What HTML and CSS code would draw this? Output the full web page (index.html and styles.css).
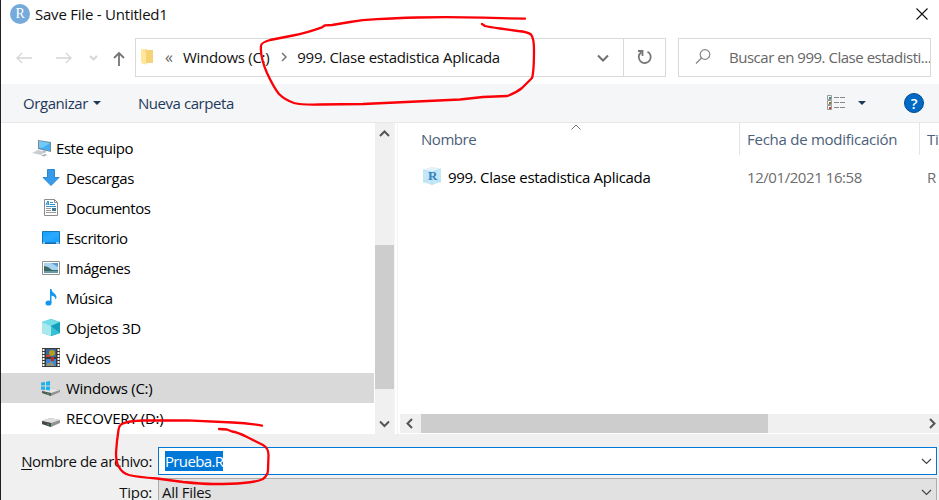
FILE: index.html
```html
<!DOCTYPE html>
<html lang="es">
<head>
<meta charset="utf-8">
<title>Save File - Untitled1</title>
<link rel="stylesheet" href="styles.css">
</head>
<body>
<main class="dialog">
  <header class="titlebar">
    <span class="app-icon">R</span>
    <span class="title"><span class="t-title">Save File - Untitled1</span></span>
    <svg class="close" width="14" height="14" viewBox="0 0 14 14"><path d="M1.500 1.500l11 11M12.500 1.500l-11 11"/></svg>
  </header>

  <nav class="navbar">
    <svg class="nav-icons" width="119" height="39" viewBox="0 0 119 39" fill="none">
      <path class="off" d="M16 20h15M21 15l-5 5 5 5M55 20h15M65 15l5 5-5 5"/>
      <path class="off chev" d="M89 18l3.500 3.500L96 18"/>
      <path class="up" d="M118 28V15M113 20l5-5 5 5"/>
    </svg>
    <div class="address">
      <svg class="folder" width="13" height="18" viewBox="0 0 13 18"><path d="M1 1h5v15H1z" fill="#ffe8a5"/><path d="M4 2h8v13H4z" fill="#f5d275"/><path d="M0 1l5 3v13l-5-3z" fill="#ffe69a"/></svg>
      <span class="dbl">«</span>
      <span class="crumb t-drive">Windows (C:)</span>
      <svg class="sep" width="8" height="10" viewBox="0 0 8 10"><path d="M2 1l4 4-4 4"/></svg>
      <span class="crumb t-file">999. Clase estadistica Aplicada</span>
      <svg class="drop" width="14" height="10" viewBox="0 0 14 10"><path d="M2 3.500l5 5 5-5"/></svg>
      <span class="refresh"><svg width="18" height="18" viewBox="0 0 18 18" fill="none"><path d="M11.500 3.700a6 6 0 1 1-6.300.5M2 3h4.500v5"/></svg></span>
    </div>
    <div class="search">
      <svg width="18" height="18" viewBox="0 0 18 18" fill="none"><circle cx="11" cy="6.500" r="4.800"/><path d="M7.500 10L2 15.500"/></svg>
      <span class="t-search">Buscar en 999. Clase estadisti...</span>
    </div>
  </nav>

  <div class="toolbar">
    <span class="t-org">Organizar</span><i class="tri"></i>
    <span class="newfolder t-new">Nueva carpeta</span>
    <svg class="view" width="20" height="18" viewBox="0 0 20 18" fill="none">
      <path d="M1.500 1.500h4v4h-4zM1.500 6.500h4v4h-4zM1.500 11.500h4v4h-4z" stroke="#999"/>
      <path d="M8 3.500h5m1 0h5M8 8.500h5m1 0h5M8 13.500h5m1 0h5" stroke="#888"/>
      <path d="M3 3h2v2H3z" fill="#3c918d"/><path d="M3 8h2v2H3z" fill="#8b7c29"/><path d="M3 13h2v2H3z" fill="#c64723"/>
    </svg>
    <i class="tri view-tri"></i>
    <span class="help">?</span>
  </div>

  <div class="content">
    <ul class="tree">
      <li class="root"><svg class="ico" width="20" height="20" viewBox="0 0 20 20"><path d="M6 2l13 2v10L6 11z" fill="#788994"/><path d="M7 3l11 2v8L7 10z" fill="#42b1f3"/><path d="M7 3l11 2-8 5-3-.5z" fill="#75c9f8"/><path d="M11 12l3 1-1 2h-3z" fill="#a9b6be"/><path d="M0 15l6-3 7 2-4 3z" fill="#c6ced4"/><path d="M9 17.500l4-1.500 2 1-3 1.500z" fill="#a5b0b8"/></svg><span class="t-equipo">Este equipo</span></li>
      <li><svg class="ico" width="20" height="20" viewBox="0 0 20 20"><path d="M6.500 1.500h7v8h4.500l-8 8-8-8h4.500z" fill="#389be9" stroke="#2788d6"/></svg><span class="t-desc">Descargas</span></li>
      <li><svg class="ico" width="20" height="20" viewBox="0 0 20 20"><path d="M3.500 1.500h10l3 3v13h-13z" fill="#fff" stroke="#8c8c8c"/><path d="M13.500 1.500v3h3" fill="none" stroke="#8c8c8c"/><path d="M9 4.500h3M9 6.500h5M5 8.500h10" stroke="#2d93ce"/><path d="M5 7l2-4 1 4M5.500 6H8" fill="none" stroke="#1986c7"/><path d="M5 10.500h5M5 12.500h5M5 14.500h10" stroke="#999"/><path d="M11 10h4v3h-4z" fill="#447a91"/></svg><span class="t-doc">Documentos</span></li>
      <li><svg class="ico" width="20" height="20" viewBox="0 0 20 20"><path d="M1.500 3.500h17v12h-17z" fill="#1aa2fc" stroke="#1976b7"/><path d="M13 4h5v4L6 14H2V9z" fill="#35adfd" opacity=".5"/><path d="M2 15h2m11 0h3" stroke="#fff"/><path d="M4 15h11" stroke="#16649c"/></svg><span class="t-desc">Escritorio</span></li>
      <li><svg class="ico" width="20" height="20" viewBox="0 0 20 20"><path d="M1.500 3.500h17v13h-17z" fill="#fff" stroke="#929292"/><path d="M3 5h14v10H3z" fill="#a8d4f0"/><path d="M3 5h7l7 4v-4z" fill="#5b9bd0"/><path d="M3 8l4 1 4 3h6v1H3z" fill="#3d6761"/><path d="M3 13h14v2H3z" fill="#669aa9"/></svg><span class="t-desc">Imágenes</span></li>
      <li><svg class="ico" width="20" height="20" viewBox="0 0 20 20"><ellipse cx="7.500" cy="15" rx="3" ry="2.600" fill="#1596ee"/><path d="M9 1h1.500c0 4 5.500 4.500 5 9l-1 1.500c0-3-2.500-3.500-4-4V15H9z" fill="#1596ee"/></svg><span class="t-desc">Música</span></li>
      <li><svg class="ico" width="20" height="20" viewBox="0 0 20 20"><path d="M1 4l9-3 9 3v11l-9 3-9-3z" fill="#35bdd1"/><path d="M1 4l9-3 9 3-9 4z" fill="#72dce7"/><path d="M1 4l9 4v10l-9-3z" fill="#a9e8ed"/><path d="M10 8l9-4v11l-9 3z" fill="#139fbd"/><path d="M10 8l9 7-9 3z" fill="#37c1d3"/></svg><span class="t-obj">Objetos 3D</span></li>
      <li><svg class="ico" width="20" height="20" viewBox="0 0 20 20"><path d="M1 0h18v19H1z" fill="#3b3838"/><path d="M5 1h10v8H5z" fill="#3667a2"/><path d="M5 11h10v7H5z" fill="#3d85cf"/><circle cx="11" cy="5" r="3" fill="#b89b1b"/><path d="M5 7h4v2H5z" fill="#d0412a"/><path d="M10 9h3v4h-3z" fill="#b72e2d"/><path d="M6 15h3v-2l4 3v2H5z" fill="#91937b"/><path d="M2.500 1v17m15-17v17" stroke="#fff" stroke-width="2" stroke-dasharray="2 1"/></svg><span class="t-vid">Videos</span></li>
      <li class="selected"><svg class="ico" width="20" height="20" viewBox="0 0 20 20"><path d="M1 13l8-3 10 2v2l-9 4-9-3z" fill="#929292"/><path d="M1 13l8-3 10 2-9 3z" fill="#e4e4e4"/><path d="M1 13l9 2v3l-9-3z" fill="#575757"/><path d="M6 15l2 .5v1l-2-.5z" fill="#24c832"/><path d="M0 4.500l4-.5v3.500H0zM5 3.700L9 3v4.500H5zM0 8.500h4V12l-4-.5zM5 8.500h4v4l-4-.5z" fill="#20b2ee"/></svg><span class="t-drive">Windows (C:)</span></li>
      <li><svg class="ico" width="20" height="20" viewBox="0 0 20 20"><path d="M1 13l8-3 10 2v3l-9 4-9-3z" fill="#929292"/><path d="M1 13l8-3 10 2-9 3z" fill="#dfdfdf"/><path d="M1 13l9 2v4l-9-3z" fill="#494949"/><path d="M6 15.500l2 .5v1l-2-.5z" fill="#24c832"/></svg><span class="t-rec">RECOVERY (D:)</span></li>
    </ul>
    <div class="vscroll">
      <svg width="19" height="20" viewBox="0 0 19 20"><path d="M5 13l4.500-4.500L14 13"/></svg>
      <div class="vthumb"></div>
      <svg width="19" height="20" viewBox="0 0 19 20"><path d="M5 7.500L9.500 12 14 7.500"/></svg>
    </div>
    <section class="files">
      <div class="columns">
        <div class="col name"><span class="t-nom">Nombre</span><svg class="sort" width="10" height="6" viewBox="0 0 10 6"><path d="M.5 5.500L5 1l4.500 4.500"/></svg></div>
        <div class="col date"><span class="t-fecha">Fecha de modificación</span></div>
        <div class="col type">Ti</div>
      </div>
      <div class="row">
        <svg class="rproj" width="20" height="20" viewBox="0 0 20 20"><path d="M1 4l9-3 9 2v13l-9 3-9-3z" fill="#c5e7f6"/><path d="M1 4l9 2 9-3-9-2z" fill="#e2f4fb"/><path d="M1 4l9 2v13M10 6l9-3M1 16l9-4 9 4" fill="none" stroke="#acd9ec" stroke-width=".7"/><text x="6" y="14">R</text></svg>
        <span class="fname"><span class="t-file">999. Clase estadistica Aplicada</span></span>
        <span class="fdate"><span class="t-date">12/01/2021 16:58</span></span>
        <span class="ftype">R</span>
      </div>
      <div class="hscroll">
        <svg width="21" height="19" viewBox="0 0 21 19"><path d="M12 5L7.500 9.500 12 14"/></svg>
        <div class="hthumb"></div>
        <svg class="right" width="15" height="19" viewBox="0 0 15 19"><path d="M6 5l4.500 4.500L6 14"/></svg>
      </div>
    </section>
  </div>

  <footer class="form">
    <div class="field">
      <label><span class="t-label"><u>N</u>ombre de archivo:</span></label>
      <div class="input"><span class="sel t-prueba">Prueba.R</span><svg width="11" height="7" viewBox="0 0 11 7"><path d="M1 1l4.500 4.500L10 1"/></svg></div>
    </div>
    <div class="field second">
      <label><span class="t-tipo"><u>T</u>ipo:</span></label>
      <div class="input combo"><span class="t-all">All Files</span><svg width="11" height="7" viewBox="0 0 11 7"><path d="M1 1l4.500 4.500L10 1"/></svg></div>
    </div>
  </footer>

  <svg class="marks" width="939" height="500" viewBox="0 0 939 500">
    <path d="M525 18.700L483 17.700Q448 16.500 417 17.500Q395 18 377 19.200Q362 20 350 22L332 25L325 25.300L322 27.300Q306 33 293 35.500L270 40Q261 42.500 261 46Q260 57 267 73Q274 88 279 94Q285 100 294 103Q302 105 320 104.500L363 104L460 99.500L483 97L507 96Q516 93 522 88L532 78Q534 72 534 50Q534 38 531 34.500Q528 32 518 31L500 28.500Q489 27 485 26L482 24"/>
    <path d="M262 425.700Q247 423 233 422.500L187 420.300L143 420.500Q128 421 123 423.500Q119 425 118.500 430L117 441L116 453Q116 463 119 467Q122 473 129 475Q137 477 157 478.500L183 482Q203 484 213 484Q233 484 243 483Q257 482 263 479Q268 475 268 470L268.500 455Q268.500 448 263 445L247 437Q237 432 232 431.500L227 429.500L219 429"/>
  </svg>
</main>
</body>
</html>
```
FILE: styles.css
```css
* { box-sizing: border-box; }
body { margin: 0; font-family: "Open Sans", "Noto Sans", sans-serif; font-size: 15px; line-height: 20px; color: #111; overflow: hidden; }
svg { flex: none; }
.dialog { position: relative; width: 939px; height: 500px; overflow: hidden; background: #fff; border-left: 1px solid #202024; white-space: nowrap; display: flex; flex-direction: column; letter-spacing: -0.3px; }
.titlebar { height: 38px; flex: none; display: flex; align-items: flex-start; padding: 4px 10px 0 9px; }
.app-icon { width: 20px; height: 20px; border-radius: 50%; background: #75aadb; color: #fff; font: 14px/19px "Liberation Serif", serif; text-align: center; }
.title { margin-left: 5px; flex: 1; }
.close { margin-top: 3px; stroke: #111; stroke-width: 1.1; }

.navbar { height: 39px; flex: none; display: flex; }
.nav-icons { flex: 0 0 119px; width: 119px; margin-right: 15px; overflow: visible; stroke-width: 1.3; }
.off { stroke: #d5d5d5; }
.chev { stroke-width: 1.8; }
.up { stroke: #757575; stroke-width: 1.8; }
.address { width: 531px; border: 1px solid #d9d9d9; display: flex; align-items: center; padding-bottom: 1px; }
.folder { margin-left: 5px; }
.dbl { margin-left: 11px; width: 18px; color: #666; font-size: 16px; }
.sep { margin-left: 11px; margin-right: 9px; fill: none; stroke: #777; stroke-width: 1.5; }
.drop { margin-left: auto; margin-right: 13px; fill: none; stroke: #707070; stroke-width: 2; }
.refresh { width: 42px; height: 37px; border-left: 1px solid #d9d9d9; display: flex; align-items: center; justify-content: center; }
.refresh path { stroke: #777; stroke-width: 1.8; }
.search { margin-left: 12px; width: 253px; border: 1px solid #d9d9d9; display: flex; align-items: center; padding: 0 0 1px 15px; color: #666; overflow: hidden; }
.search svg { stroke: #858585; stroke-width: 1.2; margin-right: 17px; }

.toolbar { height: 39px; flex: none; margin-top: 7px; background: #f5f6f7; border-bottom: 1px solid #e7e8ea; display: flex; align-items: center; padding-left: 22px; color: #1e395b; }
.tri { width: 0; height: 0; border: 4px solid transparent; border-top-color: #1e395b; border-bottom: 0; margin-left: 5px; }
.newfolder { margin-left: 37px; }
.view { margin-left: auto; }
.view-tri { margin-left: 12px; }
.help { width: 20px; height: 20px; margin-left: 38px; margin-right: 15px; border-radius: 50%; background: #0069c5; border: 1px solid #004c92; color: #fff; text-align: center; line-height: 18px; font-size: 15px; font-weight: 600; }

.content { height: 311px; flex: none; display: flex; }
.tree { list-style: none; margin: 0; padding: 10px 0 0; width: 373px; color: #000; }
.tree li { height: 30px; display: flex; align-items: center; padding-left: 40px; }
.tree li.root { padding-left: 31px; }
.tree .ico { margin-right: 5px; }
.tree .root .ico { margin-right: 4px; }
.tree .selected { background: #d9d9d9; }
.vscroll { margin-left: 1px; width: 20px; background: #f0f0f0; display: flex; flex-direction: column; align-items: flex-start; border-right: 1px solid #f5f5f5; }
.vscroll svg, .hscroll svg { fill: none; stroke: #555; stroke-width: 2; }
.vthumb { width: 19px; height: 144px; margin-top: 102px; margin-bottom: 25px; background: #cdcdcd; }
.files { flex: 1; min-width: 0; margin-left: 2px; border-left: 1px solid #f3f3f3; display: flex; flex-direction: column; overflow: hidden; }
.columns { height: 32px; flex: none; display: flex; color: #4c607a; overflow: hidden; }
.col { height: 32px; padding: 6px 0 0 7px; border-left: 1px solid #e5e5e5; flex: none; }
.name { width: 341px; border-left: 0; padding-left: 23px; display: flex; align-items: flex-start; }
.sort { margin-top: -5px; margin-left: 95px; fill: none; stroke: #777; }
.date { width: 180px; }
.row { height: 44px; display: flex; align-items: center; padding-left: 24px; }
.rproj { margin-top: -3px; }
.rproj text { font: bold 13px "Liberation Serif", serif; fill: #3283bf; }
.fname { flex: 0 0 305px; padding-left: 6px; color: #000; }
.fdate { flex: 0 0 180px; color: #6d6d6d; }
.ftype { color: #6d6d6d; }
.hscroll { margin: auto 0 1px 2px; height: 19px; background: #f0f0f0; display: flex; }
.hthumb { width: 347px; background: #cdcdcd; }
.right { margin-left: auto; }

.form { flex: 1; background: #f0f0f0; padding-top: 13px; }
.field { display: flex; height: 28px; }
.field label { width: 157px; padding: 4px 6px 0 0; text-align: right; flex: none; }
.field u { text-underline-offset: 2px; }
.input { width: 779px; height: 28px; border: 1px solid #0078d7; background: #fff; display: flex; align-items: center; justify-content: space-between; padding: 0 4px 1px 6px; }
.input svg { fill: none; stroke: #444; stroke-width: 1.2; position: relative; top: 1px; }
.sel { background: #0078d7; color: #fff; height: 20px; line-height: 20px; }
.second { margin-top: 3px; }
.combo { background: #e1e1e1; border-color: #adadad; padding-left: 3px; }
.marks { position: absolute; left: -1px; top: 0; fill: none; stroke: #fb0007; stroke-width: 2.3; stroke-linecap: round; stroke-linejoin: round; pointer-events: none; }

.t-title { letter-spacing: -0.22px; }
.t-search { letter-spacing: -0.48px; }
.t-org, .t-new, .t-desc, .t-equipo { letter-spacing: -0.43px; }
.t-doc { letter-spacing: -0.5px; }
.t-nom { letter-spacing: -0.45px; }
.t-date { letter-spacing: -0.43px; }
.t-fecha { letter-spacing: -0.26px; }
.t-label { letter-spacing: -0.42px; }
.t-prueba { letter-spacing: -0.65px; }
```
